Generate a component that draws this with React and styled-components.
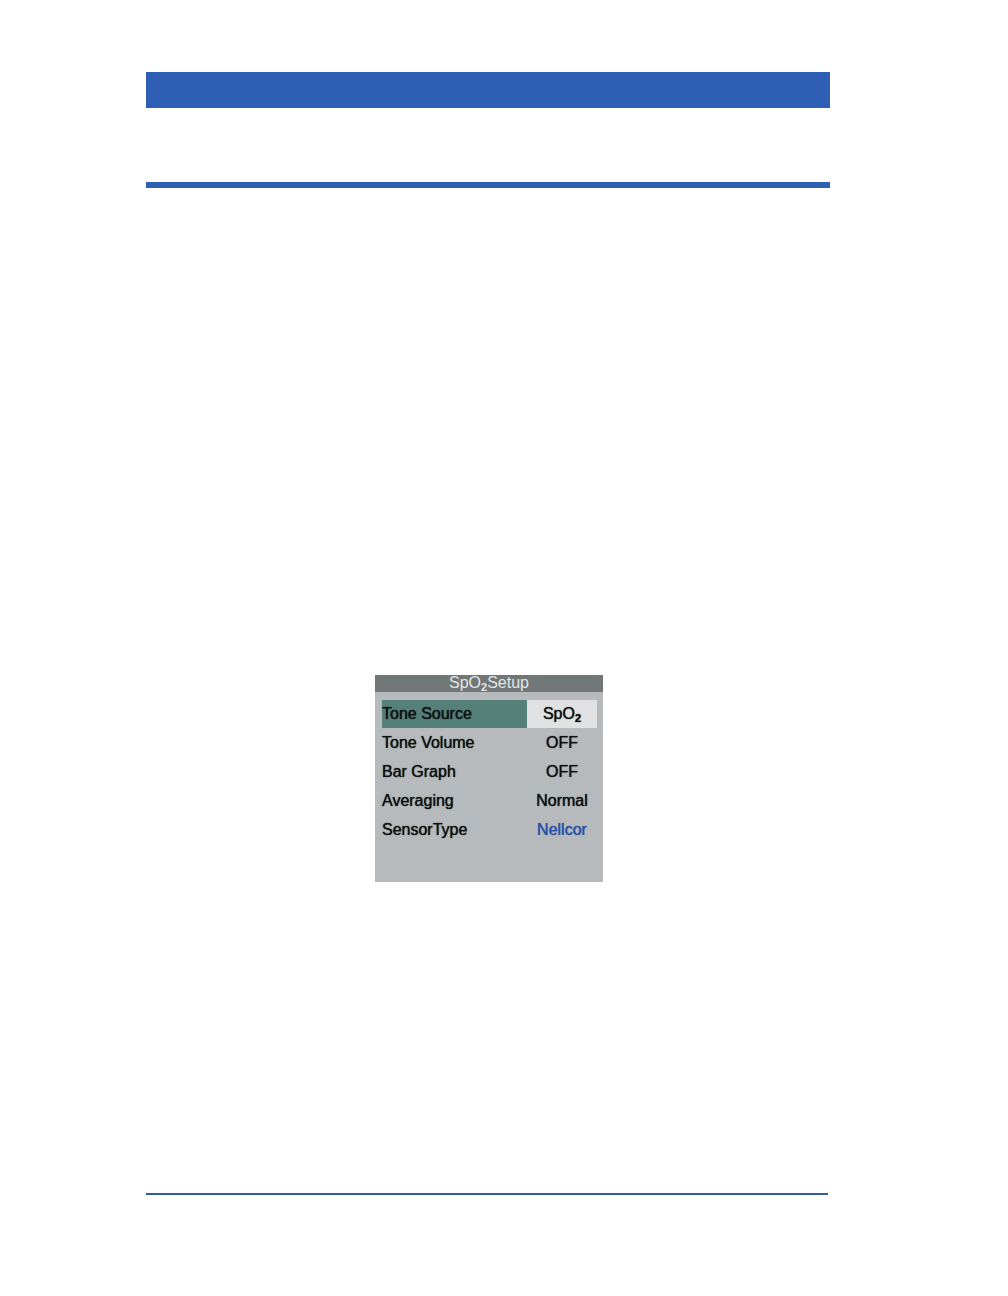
import React, { useState } from 'react'
import styled, { createGlobalStyle } from 'styled-components'

const items = [
  { label: 'Tone Source', value: <>SpO<sub>2</sub></> },
  { label: 'Tone Volume', value: 'OFF' },
  { label: 'Bar Graph', value: 'OFF' },
  { label: 'Averaging', value: 'Normal' },
  { label: 'SensorType', value: 'Nellcor', color: '#2450a8' },
]

const App = () => {
  const [selected, setSelected] = useState(0)

  return (
    <>
      <GlobalStyle />
      <Page>
        <header>
          <Banner />
          <HeaderRule />
        </header>
        <Content>
          <Panel>
            <PanelTitle>SpO<sub>2</sub>Setup</PanelTitle>
            <Menu>
              {items.map((item, index) => (
                <li key={item.label}>
                  <MenuItem
                    type='button'
                    onClick={() => setSelected(index)}
                  >
                    <Label $active={index === selected}>{item.label}</Label>
                    <Value $active={index === selected} $color={item.color}>
                      {item.value}
                    </Value>
                  </MenuItem>
                </li>
              ))}
            </Menu>
          </Panel>
        </Content>
        <FooterRule />
      </Page>
    </>
  )
}

export default App

const GlobalStyle = createGlobalStyle`
  * {
    box-sizing: border-box;
  }
  body {
    margin: 0;
    background: #fff;
    font-family: 'Liberation Sans', Arial, sans-serif;
  }
  sub {
    font-size: 11px;
    font-weight: 700;
    line-height: 0;
    vertical-align: -3px;
  }
`

const Page = styled.div`
display: flex;
flex-direction: column;
min-height: 100vh;
padding: 72px 178px 101px 146px;
`

const Banner = styled.div`
height: 36px;
background: #2f5eb5;
`

const HeaderRule = styled.div`
height: 6px;
margin-top: 74px;
background: #2f5eb5;
`

const Content = styled.main`
display: flex;
flex: 1;
flex-direction: column;
align-items: center;
padding: 487px 0 40px 2px;
`

const Panel = styled.section`
width: 228px;
max-width: 100%;
background: #b7babc;
`

const PanelTitle = styled.h1`
margin: 0;
padding-bottom: 1px;
background: #717777;
color: #e2e5e5;
font-size: 16px;
font-weight: 400;
line-height: 16px;
text-align: center;
`

const Menu = styled.ul`
display: flex;
flex-direction: column;
gap: 1px;
margin: 0;
padding: 8px 6px 38px 7px;
list-style: none;
`

const MenuItem = styled.button`
display: flex;
width: 100%;
padding: 0;
border: 0;
background: none;
color: #0c0f10;
font-family: inherit;
font-size: 16px;
line-height: 28px;
text-align: left;
text-shadow: 0 0 1px currentColor;
cursor: pointer;
`

const Label = styled.span`
flex: 1;
background: ${({ $active }) => ($active ? '#557f79' : 'transparent')};
`

const Value = styled.span`
flex: 0 0 70px;
background: ${({ $active }) => ($active ? '#dfe1e2' : 'transparent')};
color: ${({ $color }) => $color || 'inherit'};
text-align: center;
`

const FooterRule = styled.footer`
height: 2px;
margin-right: 2px;
background: #315a9f;
`
